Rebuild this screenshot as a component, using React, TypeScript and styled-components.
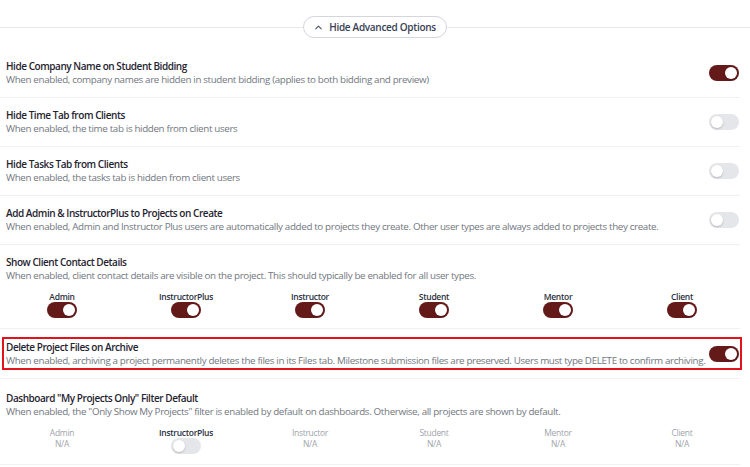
import React from "react";
import styled, { createGlobalStyle } from "styled-components";

const GlobalStyle = createGlobalStyle`
  body {
    margin: 0;
    background: #ffffff;
    font-family: "Open Sans", "Noto Sans", sans-serif;
  }
`;

const Page = styled.div`
  width: 750px;
  padding-top: 16px;
`;

const HeaderBar = styled.div`
  display: flex;
  align-items: center;
  justify-content: center;
  padding-bottom: 11px;
  &::before,
  &::after {
    content: "";
    flex: 1;
    height: 1px;
    background: #e8e9ec;
  }
`;

const PillButton = styled.button`
  display: flex;
  align-items: center;
  gap: 5px;
  height: 22px;
  padding: 0 10px 0 9px;
  border: 1px solid #d3d6db;
  border-radius: 999px;
  background: #fff;
  color: #374151;
  font-family: inherit;
  font-size: 10px;
  font-weight: 600;
  letter-spacing: -0.3px;
`;

const List = styled.div`
  width: 740px;
`;

const Row = styled.div<{ $pad?: number }>`
  display: flex;
  align-items: center;
  justify-content: space-between;
  gap: 12px;
  padding: ${(p) => p.$pad ?? 10}px 1px ${(p) => p.$pad ?? 10}px 6px;
  border-bottom: 1px solid #f1f1f3;
`;

const StackRow = styled.div<{ $top?: number }>`
  padding: ${(p) => p.$top ?? 10}px 1px 10px 6px;
  border-bottom: 1px solid #f1f1f3;
`;

const Highlight = styled.div`
  flex: 1;
  display: flex;
  align-items: center;
  justify-content: space-between;
  gap: 4px;
  margin: 0 -2px 0 -4px;
  padding: 1px 1px 0 2px;
  border: 2px solid #e3131b;
`;

const Text = styled.div`
  display: flex;
  flex-direction: column;
  min-width: 0;
`;

const Title = styled.div`
  font-size: 10px;
  line-height: 14px;
  font-weight: 600;
  color: #1f2430;
  letter-spacing: -0.45px;
`;

const Desc = styled.div`
  font-size: 9.8px;
  line-height: 14px;
  color: #717680;
  letter-spacing: -0.35px;
  white-space: nowrap;
`;

const Track = styled.span<{ $on: boolean }>`
  position: relative;
  display: inline-block;
  flex: none;
  width: 30px;
  height: 16px;
  border-radius: 8px;
  background: ${(p) => (p.$on ? "#651a1a" : "#e4e6ea")};
`;

const Knob = styled.span<{ $on: boolean }>`
  position: absolute;
  top: 2px;
  left: ${(p) => (p.$on ? 16 : 2)}px;
  width: 12px;
  height: 12px;
  border-radius: 50%;
  background: #fff;
  box-shadow: 0 1px 2px rgba(0, 0, 0, 0.2);
`;

const RoleGrid = styled.div`
  display: grid;
  grid-template-columns: repeat(6, 1fr);
  width: 744px;
  margin: 8px 0 0 -6px;
`;

const RoleCell = styled.div`
  display: flex;
  flex-direction: column;
  align-items: center;
`;

const RoleLabel = styled.div<{ $muted: boolean }>`
  font-size: 8.5px;
  line-height: 11px;
  letter-spacing: -0.3px;
  font-weight: ${(p) => (p.$muted ? 400 : 600)};
  color: ${(p) => (p.$muted ? "#a0a4ab" : "#2b3140")};
`;

const NA = styled.div`
  font-size: 8.5px;
  line-height: 11px;
  letter-spacing: -0.3px;
  color: #a0a4ab;
`;

const Toggle = ({ on }: { on: boolean }) => (
  <Track $on={on}>
    <Knob $on={on} />
  </Track>
);

const ChevronUp = () => (
  <svg width="11" height="11" viewBox="0 0 24 24" fill="none" stroke="#4b5563" strokeWidth="2.4" strokeLinecap="round" strokeLinejoin="round">
    <path d="M6 15l6-6 6 6" />
  </svg>
);

const roles = ["Admin", "InstructorPlus", "Instructor", "Student", "Mentor", "Client"];

const simple = [
  {
    title: "Hide Company Name on Student Bidding",
    desc: "When enabled, company names are hidden in student bidding (applies to both bidding and preview)",
    on: true,
  },
  {
    title: "Hide Time Tab from Clients",
    desc: "When enabled, the time tab is hidden from client users",
    on: false,
  },
  {
    title: "Hide Tasks Tab from Clients",
    desc: "When enabled, the tasks tab is hidden from client users",
    on: false,
  },
  {
    title: "Add Admin & InstructorPlus to Projects on Create",
    desc: "When enabled, Admin and Instructor Plus users are automatically added to projects they create. Other user types are always added to projects they create.",
    on: false,
  },
];

export default function App() {
  return (
    <>
      <GlobalStyle />
      <Page>
        <HeaderBar>
          <PillButton>
            <ChevronUp />
            Hide Advanced Options
          </PillButton>
        </HeaderBar>
        <List>
          {simple.map((s) => (
            <Row key={s.title}>
              <Text>
                <Title>{s.title}</Title>
                <Desc>{s.desc}</Desc>
              </Text>
              <Toggle on={s.on} />
            </Row>
          ))}

          <StackRow>
            <Title>Show Client Contact Details</Title>
            <Desc>
              When enabled, client contact details are visible on the project. This should typically be enabled for all user types.
            </Desc>
            <RoleGrid>
              {roles.map((r) => (
                <RoleCell key={r}>
                  <RoleLabel $muted={false}>{r}</RoleLabel>
                  <Toggle on />
                </RoleCell>
              ))}
            </RoleGrid>
          </StackRow>

          <Row $pad={8}>
            <Highlight>
              <Text>
                <Title>Delete Project Files on Archive</Title>
                <Desc>
                  When enabled, archiving a project permanently deletes the files in its Files tab. Milestone submission files are preserved. Users must type DELETE to confirm archiving.
                </Desc>
              </Text>
              <Toggle on />
            </Highlight>
          </Row>

          <StackRow $top={12}>
            <Title>Dashboard "My Projects Only" Filter Default</Title>
            <Desc>
              When enabled, the "Only Show My Projects" filter is enabled by default on dashboards. Otherwise, all projects are shown by default.
            </Desc>
            <RoleGrid>
              {roles.map((r) => (
                <RoleCell key={r}>
                  <RoleLabel $muted={r !== "InstructorPlus"}>{r}</RoleLabel>
                  {r === "InstructorPlus" ? <Toggle on={false} /> : <NA>N/A</NA>}
                </RoleCell>
              ))}
            </RoleGrid>
          </StackRow>
        </List>
      </Page>
    </>
  );
}
